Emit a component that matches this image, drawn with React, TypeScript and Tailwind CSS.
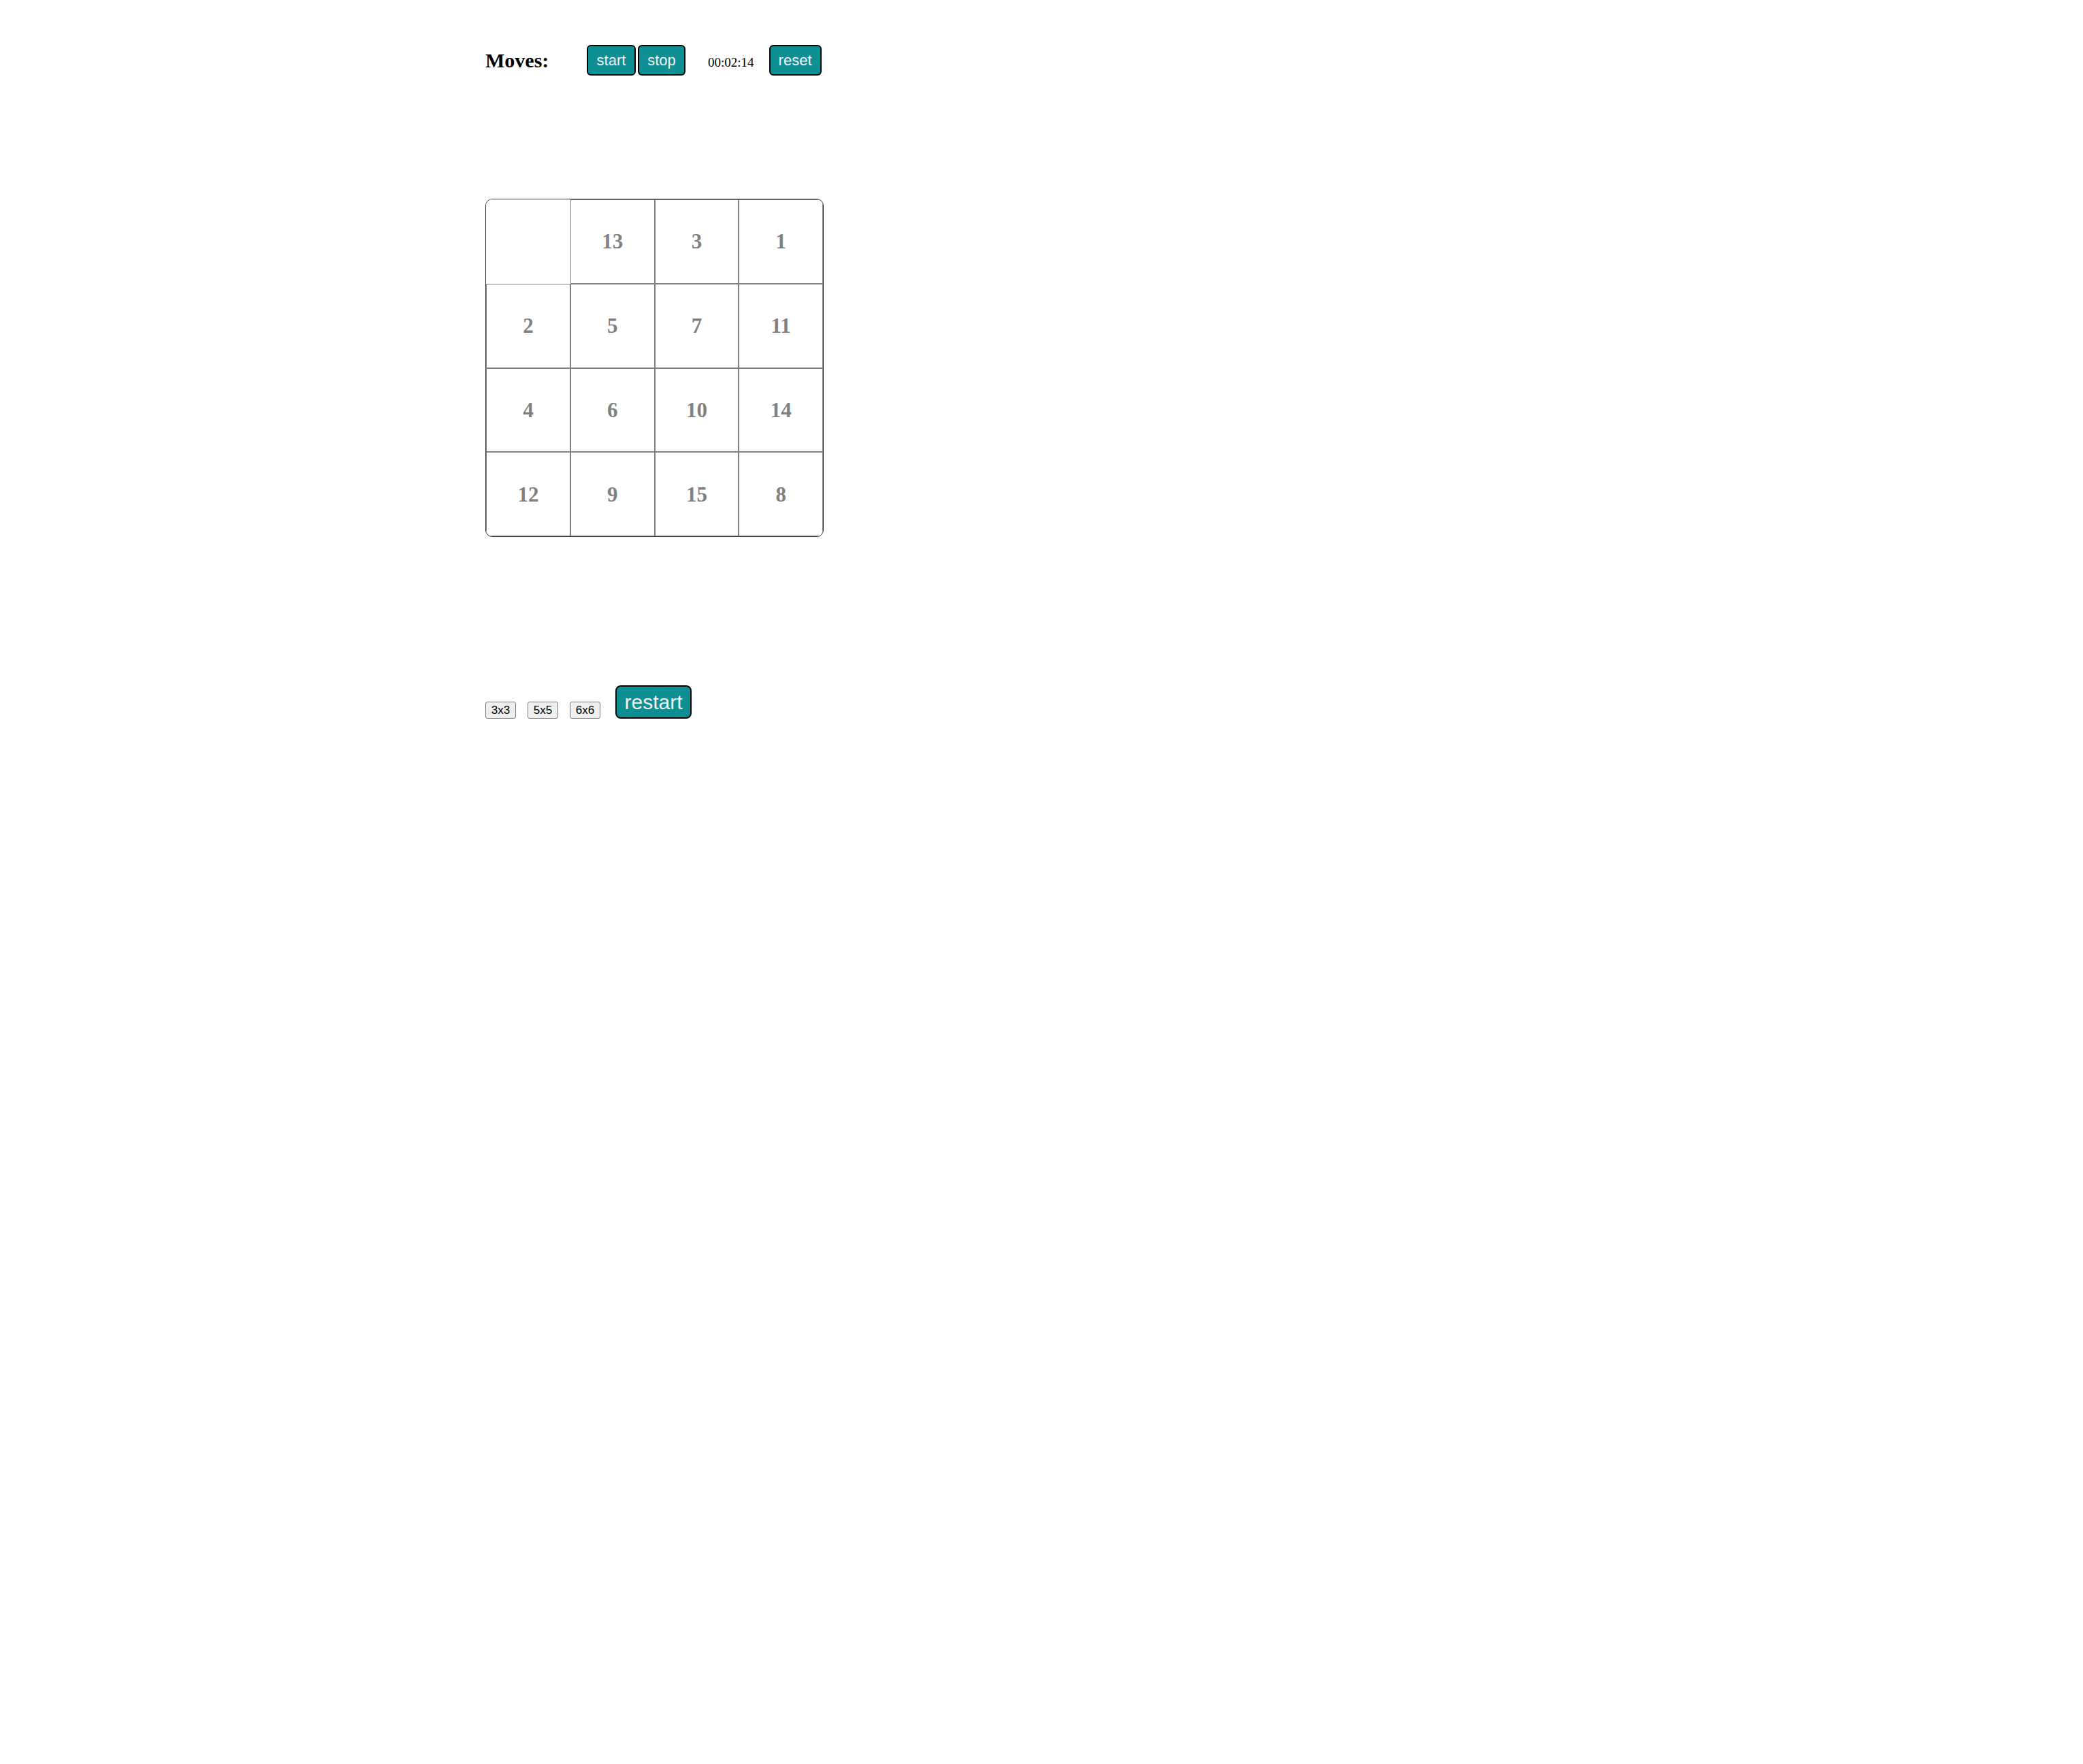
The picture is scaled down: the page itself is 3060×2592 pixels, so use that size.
import React from "react";

const tiles: (number | null)[] = [null, 13, 3, 1, 2, 5, 7, 11, 4, 6, 10, 14, 12, 9, 15, 8];

const teal =
  "bg-[#0e8f93] border-2 border-black text-[#f2f2f2] flex items-center justify-center leading-none font-['Liberation_Sans',Arial,sans-serif]";

export default function App() {
  return (
    <div className="min-h-[2592px] w-full bg-white pl-[713px] pt-[66px] font-['Liberation_Serif',serif]">
      <div className="flex items-center h-[45px]">
        <h3 className="w-[149px] text-[30px] font-bold text-black leading-none font-['Liberation_Serif',serif]">
          Moves:
        </h3>
        <button className={`${teal} w-[72px] h-[45px] rounded-[6px] text-[22px]`}>start</button>
        <button className={`${teal} ml-[3px] w-[70px] h-[45px] rounded-[6px] text-[22px]`}>stop</button>
        <span className="ml-[33px] mt-[6px] text-[19px] text-black leading-none font-['Liberation_Serif',serif]">
          00:02:14
        </span>
        <button className={`${teal} ml-[22px] w-[77px] h-[45px] rounded-[6px] text-[22px]`}>reset</button>
      </div>

      <div className="mt-[181px] w-[497px] h-[497px] border border-[#333333] rounded-[10px] overflow-hidden grid grid-cols-4 grid-rows-4">
        {tiles.map((t, i) =>
          t === null ? (
            <div key={i} className="bg-white" />
          ) : (
            <div
              key={i}
              className="border border-[#808080] flex items-center justify-center text-[31px] font-bold text-[#808080] leading-none font-['Liberation_Serif',serif]"
            >
              {t}
            </div>
          )
        )}
      </div>

      <div className="mt-[218px] flex items-end">
        {["3x3", "5x5", "6x6"].map((s, i) => (
          <button
            key={s}
            className={`${i > 0 ? "ml-[17px]" : ""} w-[45px] h-[25px] bg-[#efefef] border border-[#767676] rounded-[3px] text-[17px] text-black leading-none flex items-center justify-center font-['Liberation_Sans',Arial,sans-serif]`}
          >
            {s}
          </button>
        ))}
        <button className={`${teal} ml-[22px] w-[112px] h-[49px] rounded-[8px] text-[30px]`}>restart</button>
      </div>
    </div>
  );
}
